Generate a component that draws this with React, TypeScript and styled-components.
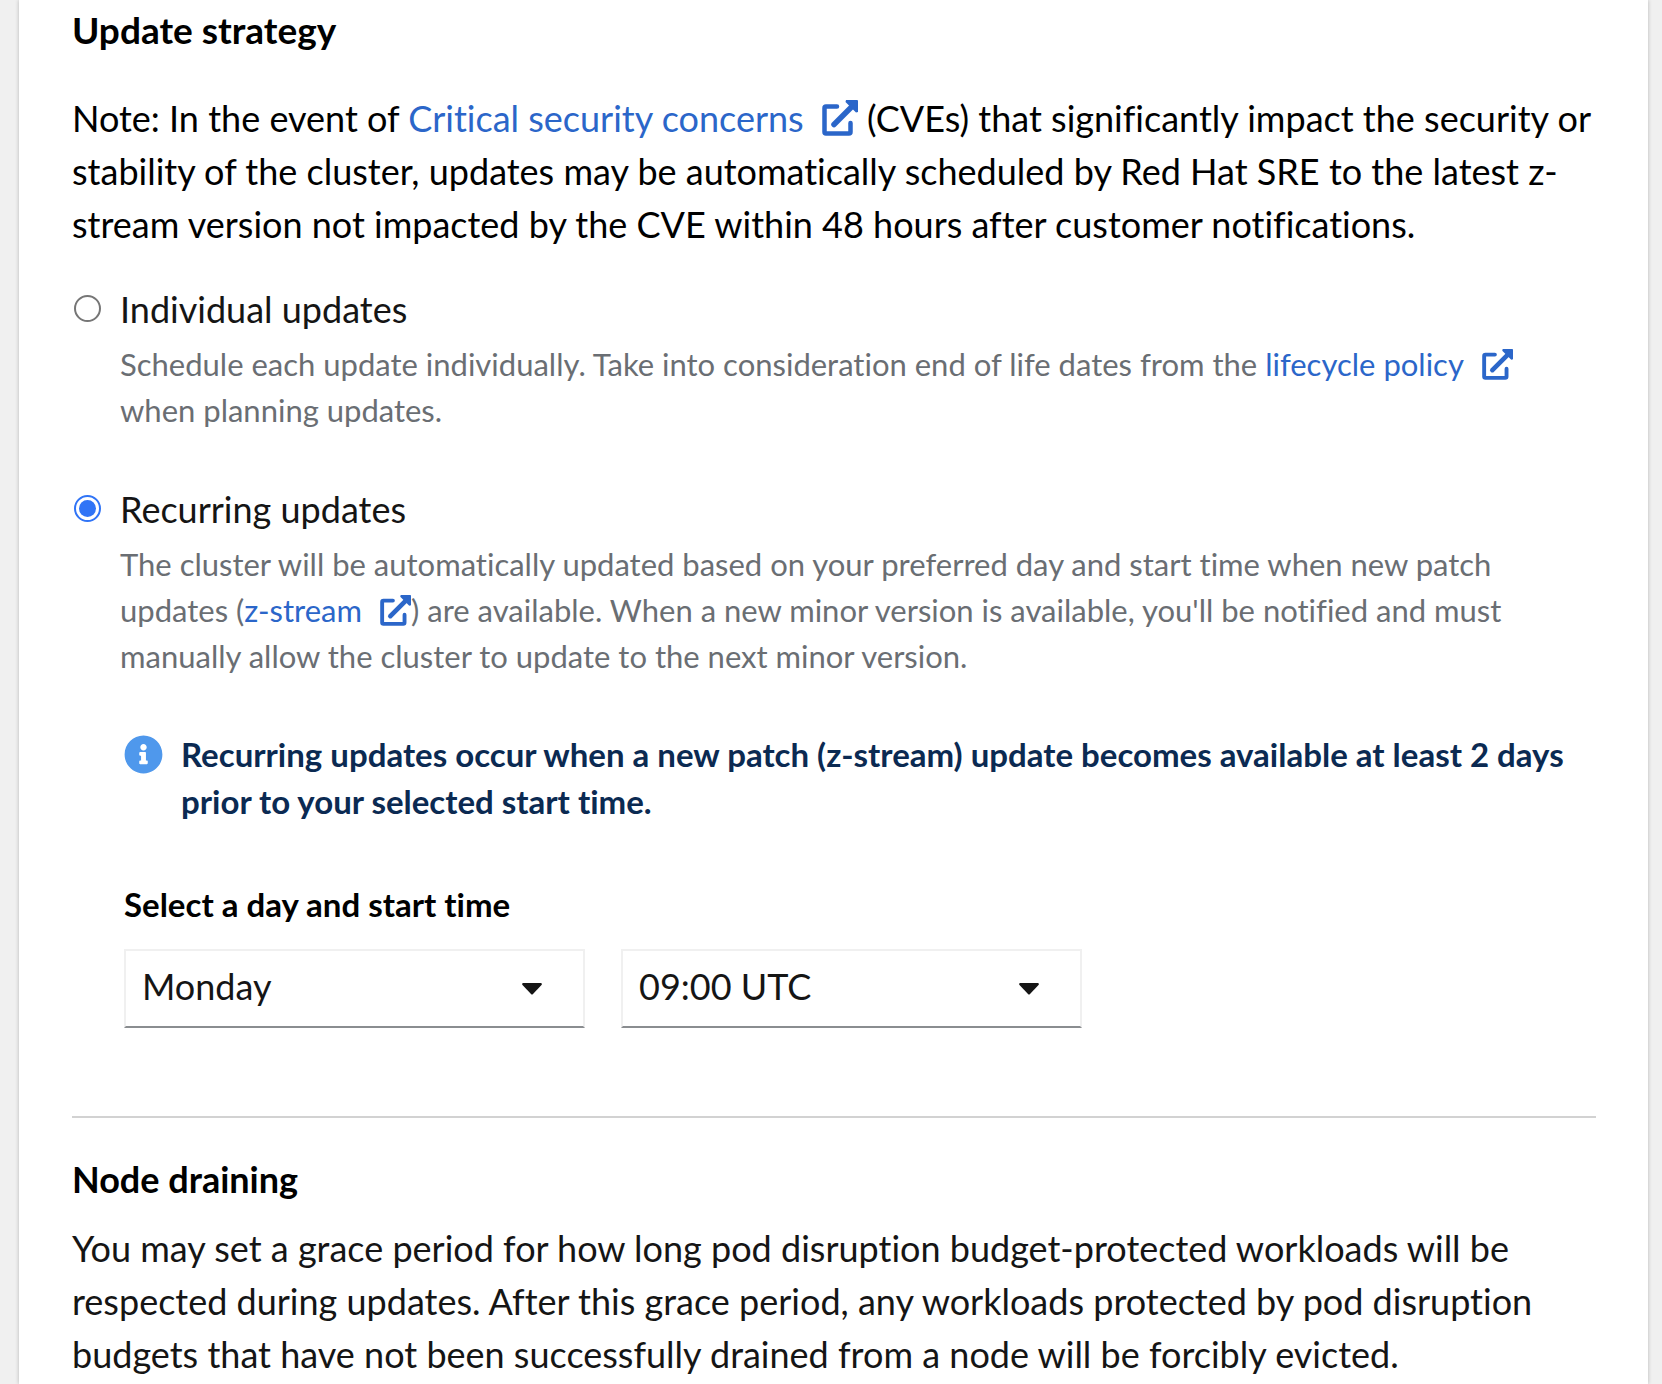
import React, { useState } from "react";
import styled, { createGlobalStyle } from "styled-components";
import { FaInfoCircle } from "react-icons/fa";

const GlobalStyle = createGlobalStyle`
  *, *::before, *::after {
    box-sizing: border-box;
  }

  body {
    margin: 0;
    background: #f0f0f0;
    color: #151515;
    font-family: Lato, "Liberation Sans", sans-serif;
    font-size: 36px;
    font-variant-ligatures: none;
    line-height: 53px;
  }
`;

const Page = styled.div`
  padding: 0 14px 0 19px;
`;

const Card = styled.main`
  display: flex;
  flex-direction: column;
  min-height: 100vh;
  padding: 7px 52px 0 53px;
  background: #fff;
  box-shadow: 0 0 4px rgba(3, 3, 3, 0.24);
`;

const Heading = styled.h2<{ $minor?: boolean }>`
  margin: 0;
  color: #000;
  font-size: ${(p) => (p.$minor ? 36 : 37)}px;
  font-weight: 700;
  line-height: 45px;
`;

const Text = styled.p<{ $strong?: boolean }>`
  margin: 0;
  color: ${(p) => (p.$strong ? "#000" : "#151515")};
`;

const Section = styled.section<{ $gap: number }>`
  display: flex;
  flex-direction: column;
  gap: ${(p) => p.$gap}px;
`;

const Link = styled.a`
  color: #2b66c9;
  text-decoration: none;
`;

const LinkIcon = styled.svg`
  width: 1em;
  height: 1em;
  margin-left: 18px;
  vertical-align: -4px;
`;

const Strategies = styled.fieldset`
  display: flex;
  flex-direction: column;
  gap: 50px;
  min-width: 0;
  margin: -8px 0 0;
  padding: 0;
  border: 0;
`;

const Option = styled.div`
  display: grid;
  grid-template-columns: 27px 1fr;
  column-gap: 19px;
  row-gap: 5px;
  padding-left: 2px;
`;

const Radio = styled.input`
  appearance: none;
  display: grid;
  place-items: center;
  width: 27px;
  height: 27px;
  margin: 12px 0 0;
  border: 2px solid #767676;
  border-radius: 50%;
  background: #fff;

  &:checked {
    border-color: #3074f6;
  }

  &:checked::before {
    content: "";
    width: 17px;
    height: 17px;
    border-radius: 50%;
    background: #3074f6;
  }
`;

const Description = styled.p`
  grid-column: 2;
  margin: 0;
  padding-right: 20px;
  color: #6a6e73;
  font-size: 31px;
  line-height: 46px;
`;

const Schedule = styled.div`
  display: flex;
  flex-direction: column;
  gap: 56px;
  padding: 12px 0 0 52px;
`;

const Alert = styled.div`
  display: flex;
  gap: 18px;
  color: #0b2a52;
  font-size: 33px;
  font-weight: 700;
  line-height: 47px;
`;

const AlertIcon = styled(FaInfoCircle)`
  flex: none;
  width: 39px;
  height: 39px;
  margin-top: 4px;
  color: #4f98ec;
`;

const Field = styled.div`
  display: flex;
  flex-direction: column;
  gap: 21px;
`;

const FieldLabel = styled.div`
  color: #000;
  font-size: 33px;
  font-weight: 700;
  line-height: 47px;
`;

const Selects = styled.div`
  display: flex;
  gap: 36px;
`;

const SelectBox = styled.div`
  display: grid;
  grid-template-columns: 1fr 63px;
  align-items: center;
  width: 461px;
`;

const Select = styled.select`
  grid-area: 1 / 1 / 2 / 3;
  appearance: none;
  height: 79px;
  padding: 0 60px 4px 16px;
  border: 2px solid #f0f0f0;
  border-bottom-color: #8a8d90;
  border-radius: 0;
  background: #fff;
  color: #151515;
  font: inherit;
`;

const Caret = styled.svg`
  grid-area: 1 / 2 / 2 / 3;
  width: 20px;
  height: 12px;
  pointer-events: none;
`;

const Divider = styled.hr`
  width: 100%;
  height: 2px;
  margin: 88px 0 39px;
  border: 0;
  background: #d2d2d2;
`;

function ExternalLink({ children }: { children: React.ReactNode }) {
  return (
    <Link href="#">
      {children}
      <LinkIcon viewBox="0 0 36 36" aria-hidden="true">
        <path
          d="M15 6.500H4Q2.500 6.500 2.500 8V32Q2.500 33.500 4 33.500H27Q28.500 33.500 28.500 32V23"
          fill="none"
          stroke="currentColor"
          strokeWidth="4.500"
          strokeLinecap="round"
        />
        <path d="M12 24.500L30 6.500" fill="none" stroke="currentColor" strokeWidth="5.500" strokeLinecap="round" />
        <path d="M24 0H35Q36 0 36 1V12L34 12.500L23.500 2Z" fill="currentColor" />
      </LinkIcon>
    </Link>
  );
}

function Dropdown({ label, options }: { label: string; options: string[] }) {
  return (
    <SelectBox>
      <Select aria-label={label} defaultValue={options[0]}>
        {options.map((o) => (
          <option key={o}>{o}</option>
        ))}
      </Select>
      <Caret viewBox="0 0 20 12" aria-hidden="true">
        <path d="M1 0H19Q20.500 0.500 19.500 2L11 11Q10 12 9 11L0.500 2Q-0.500 0.500 1 0Z" fill="#151515" />
      </Caret>
    </SelectBox>
  );
}

export default function App() {
  const [strategy, setStrategy] = useState("recurring");
  return (
    <>
      <GlobalStyle />
      <Page>
        <Card>
          <Section $gap={40}>
            <Heading>Update strategy</Heading>
            <Text $strong>
              Note: In the event of <ExternalLink>Critical security concerns</ExternalLink> (CVEs) that
              significantly impact the security or stability of the cluster, updates may be automatically
              scheduled by Red Hat SRE to the latest z-stream version not impacted by the CVE within 48
              hours after customer notifications.
            </Text>
            <Strategies aria-label="Update strategy">
              <Option>
                <Radio
                  type="radio"
                  id="individual"
                  name="strategy"
                  checked={strategy === "individual"}
                  onChange={() => setStrategy("individual")}
                />
                <label htmlFor="individual">Individual updates</label>
                <Description>
                  Schedule each update individually. Take into consideration end of life dates from the{" "}
                  <ExternalLink>lifecycle policy</ExternalLink> when planning updates.
                </Description>
              </Option>
              <Option>
                <Radio
                  type="radio"
                  id="recurring"
                  name="strategy"
                  checked={strategy === "recurring"}
                  onChange={() => setStrategy("recurring")}
                />
                <label htmlFor="recurring">Recurring updates</label>
                <Description>
                  The cluster will be automatically updated based on your preferred day and start time when
                  new patch updates (<ExternalLink>z-stream</ExternalLink>) are available. When a new minor
                  version is available, you'll be notified and must manually allow the cluster to update to
                  the next minor version.
                </Description>
              </Option>
            </Strategies>
            <Schedule>
              <Alert>
                <AlertIcon aria-hidden="true" />
                <span>
                  Recurring updates occur when a new patch (z-stream) update becomes available at least 2
                  days prior to your selected start time.
                </span>
              </Alert>
              <Field>
                <FieldLabel>Select a day and start time</FieldLabel>
                <Selects>
                  <Dropdown
                    label="Day"
                    options={["Monday", "Tuesday", "Wednesday", "Thursday", "Friday", "Saturday", "Sunday"]}
                  />
                  <Dropdown label="Start time" options={["09:00 UTC", "10:00 UTC", "11:00 UTC"]} />
                </Selects>
              </Field>
            </Schedule>
          </Section>
          <Divider />
          <Section $gap={20}>
            <Heading $minor>Node draining</Heading>
            <Text>
              You may set a grace period for how long pod disruption budget-protected workloads will be
              respected during updates. After this grace period, any workloads protected by pod disruption
              budgets that have not been successfully drained from a node will be forcibly evicted.
            </Text>
          </Section>
        </Card>
      </Page>
    </>
  );
}
